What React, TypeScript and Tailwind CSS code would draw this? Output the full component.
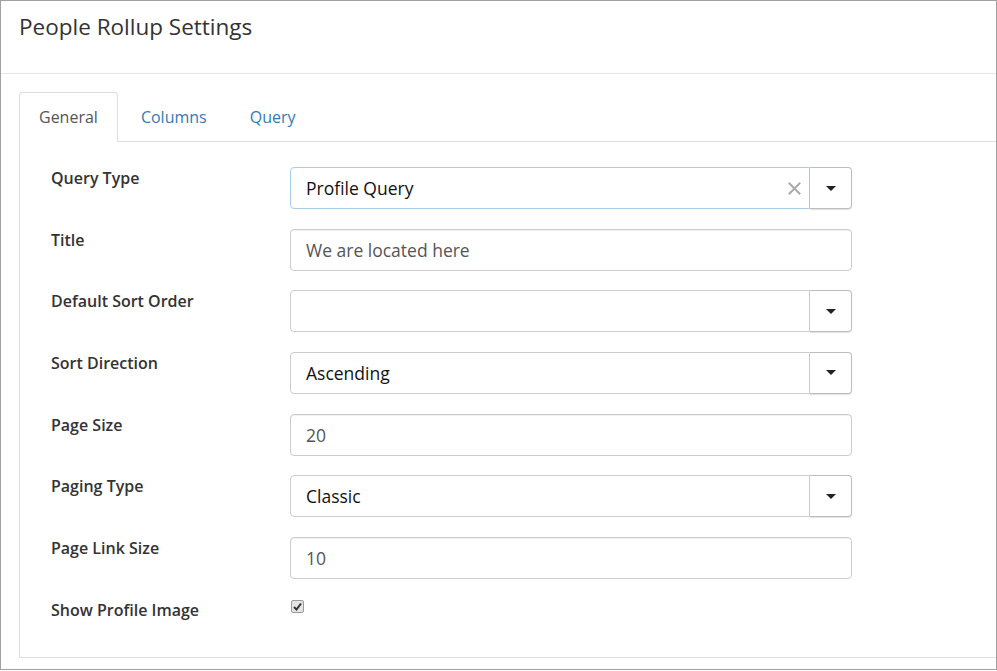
import React from "react";

const Caret = () => (
  <div className="w-0 h-0 border-l-[5px] border-r-[5px] border-t-[5px] border-l-transparent border-r-transparent border-t-[#222]" />
);

const Select = ({ value, clear, focused }: { value: string; clear?: boolean; focused?: boolean }) => (
  <div className="flex h-[42px] w-[562px]">
    <div
      className={
        "flex-1 flex items-center pl-[15px] pr-[8px] border rounded-l-[4px] " +
        (focused ? "border-[#a9cde6]" : "border-[#ccc]")
      }
    >
      <span className="flex-1 text-[17.5px] text-[#111]">{value}</span>
      {clear && (
        <svg width="13" height="13" viewBox="0 0 13 13">
          <path d="M1.5 1.5 L11.5 11.5 M11.5 1.5 L1.5 11.5" stroke="#aaa" strokeWidth="2" strokeLinecap="square" />
        </svg>
      )}
    </div>
    <div className="w-[42px] flex items-center justify-center border-y border-r border-[#bdbdbd] rounded-r-[4px] shadow-[0_1px_1px_rgba(0,0,0,0.12)]">
      <Caret />
    </div>
  </div>
);

const Input = ({ value }: { value: string }) => (
  <div className="flex items-center h-[42px] w-[562px] border border-[#ccc] rounded-[4px] pl-[15px] text-[17.5px] text-[#555] shadow-[inset_0_1px_1px_rgba(0,0,0,0.06)]">
    {value}
  </div>
);

const Row = ({ label, children }: { label: string; children: React.ReactNode }) => (
  <div className="flex">
    <div className="w-[239px] text-[16px] leading-[22px] font-semibold text-[#333]">{label}</div>
    {children}
  </div>
);

export default function App() {
  return (
    <div className="w-[997px] h-[670px] border border-[#a0a0a0] bg-white overflow-hidden font-['Open_Sans',sans-serif]">
      <div className="h-[73px] border-b border-[#e5e5e5] pl-[18px] pt-[11px]">
        <h4 className="text-[22.5px] leading-[30px] text-[#333]">People Rollup Settings</h4>
      </div>
      <div className="pt-[18px] pl-[18px]">
        <div className="flex border-b border-[#ddd] text-[16px] leading-[22px]">
          <div className="-mb-px pl-[19px] pr-[19px] py-[13px] border border-[#ddd] border-b-white bg-white rounded-t-[4px] text-[#555] mr-[3px]">
            General
          </div>
          <div className="-mb-px pl-[19px] pr-[19px] py-[13px] border border-transparent text-[#337ab7] mr-[3px]">Columns</div>
          <div className="-mb-px pl-[19px] pr-[19px] py-[13px] border border-transparent text-[#337ab7]">Query</div>
        </div>
        <div className="h-[516px] border-l border-b border-[#ddd] pt-[25px] pl-[31px]">
          <div className="flex flex-col gap-y-[19.67px]">
            <Row label="Query Type">
              <Select value="Profile Query" clear focused />
            </Row>
            <Row label="Title">
              <Input value="We are located here" />
            </Row>
            <Row label="Default Sort Order">
              <Select value="" />
            </Row>
            <Row label="Sort Direction">
              <Select value="Ascending" />
            </Row>
            <Row label="Page Size">
              <Input value="20" />
            </Row>
            <Row label="Paging Type">
              <Select value="Classic" />
            </Row>
            <Row label="Page Link Size">
              <Input value="10" />
            </Row>
            <Row label="Show Profile Image">
              <div className="pt-px pl-px">
                <div className="w-[13px] h-[13px] rounded-[2px] border border-[#9a9a9a] bg-[#e4e4e4] flex items-center justify-center">
                  <svg width="9" height="9" viewBox="0 0 9 9">
                    <path d="M1 5 L3.5 7.5 L8 1.5" stroke="#333" strokeWidth="2" fill="none" />
                  </svg>
                </div>
              </div>
            </Row>
          </div>
        </div>
      </div>
    </div>
  );
}
